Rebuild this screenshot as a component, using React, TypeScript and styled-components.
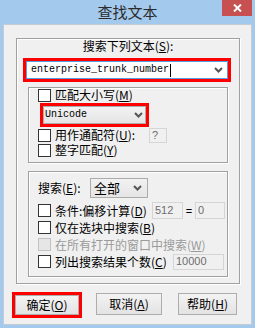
import { createGlobalStyle, styled } from 'styled-components'

const GlobalStyle = createGlobalStyle`
  html, body {
    margin: 0;
    padding: 0;
    background: #a3c9ec;
  }
  body {
    font-family: "Noto Sans CJK SC", "Liberation Sans", sans-serif;
    font-size: 12px;
    color: #000;
  }
`

const Window = styled.div`
  width: 255px;
  height: 328px;
  background: #a3c9ec;
  display: flex;
  flex-direction: column;
`

const TitleBar = styled.div`
  flex: none;
  height: 24px;
  display: grid;
  grid-template-columns: 1fr auto 1fr;
  align-items: start;
`

const Title = styled.div`
  grid-column: 2;
  font-size: 15px;
  line-height: 24px;
  color: #2b2b2b;
`

const CloseButton = styled.div`
  grid-column: 3;
  justify-self: end;
  margin-right: 3px;
  width: 30px;
  height: 16px;
  background: #c75050;
  display: flex;
  align-items: center;
  justify-content: center;
`

const Body = styled.div`
  flex: 1;
  margin: 0 3px 3px;
  background: #f0f0f0;
  border: 1px solid #c3ccd5;
  padding: 13px 0 0 10px;
  display: flex;
  flex-direction: column;
  align-items: flex-start;
`

const GroupBox = styled.div<{ $w: number; $h: number; $mt?: number; $ml?: number }>`
  box-sizing: border-box;
  width: ${(p) => p.$w}px;
  height: ${(p) => p.$h}px;
  margin: ${(p) => p.$mt ?? 0}px 0 0 ${(p) => p.$ml ?? 0}px;
  border: 1px solid #a0a0a0;
  box-shadow: inset 1px 1px 0 #fff, 1px 1px 0 #fff;
  display: flex;
  flex-direction: column;
  align-items: flex-start;
`

const SearchLabel = styled.div`
  align-self: stretch;
  text-align: center;
  line-height: 14px;
`

const Key = styled.span`
  text-decoration: underline;
`

const RedFrame = styled.div<{ $w: number; $mt?: number; $ml?: number }>`
  box-sizing: border-box;
  width: ${(p) => p.$w}px;
  margin: ${(p) => p.$mt ?? 0}px 0 0 ${(p) => p.$ml ?? 0}px;
  border: 3px solid #ff0000;
  display: flex;
`

const EditCombo = styled.div`
  flex: 1;
  box-sizing: border-box;
  height: 18px;
  border: 1px solid #569de5;
  background: #fff;
  display: flex;
  align-items: center;
  padding: 0 4px 0 4px;
`

const MonoText = styled.span`
  font-family: "Liberation Mono", "DejaVu Sans Mono", monospace;
  font-size: 10px;
  line-height: 12px;
  color: #000;
`

const Caret = styled.span`
  width: 1px;
  height: 13px;
  background: #000;
  margin-left: 1px;
`

const Spacer = styled.span`
  flex: 1;
`

const DropCombo = styled.div<{ $w: number; $h: number; $pl: number; $pr: number }>`
  box-sizing: border-box;
  width: ${(p) => p.$w}px;
  height: ${(p) => p.$h}px;
  border: 1px solid #acacac;
  background: linear-gradient(#f2f2f2, #e5e5e5);
  display: flex;
  align-items: center;
  padding: 0 ${(p) => p.$pr}px 0 ${(p) => p.$pl}px;
`

const ComboText = styled.span`
  font-size: 13px;
  line-height: 16px;
`

const Row = styled.div<{ $h: number; $mt?: number; $pl?: number }>`
  height: ${(p) => p.$h}px;
  margin-top: ${(p) => p.$mt ?? 0}px;
  padding-left: ${(p) => p.$pl ?? 9}px;
  display: flex;
  align-items: center;
  white-space: nowrap;
`

const CheckBox = styled.span<{ $disabled?: boolean }>`
  box-sizing: border-box;
  flex: none;
  width: 13px;
  height: 13px;
  border: 1px solid ${(p) => (p.$disabled ? '#c2c2c2' : '#333')};
  background: ${(p) => (p.$disabled ? '#e6e6e6' : '#fff')};
  margin-right: 4px;
`

const CheckLabel = styled.span<{ $w?: number; $disabled?: boolean }>`
  ${(p) => (p.$w ? `width: ${p.$w}px;` : '')}
  line-height: 14px;
  color: ${(p) => (p.$disabled ? '#9a9a9a' : '#000')};
`

const PlainLabel = styled.span<{ $w: number }>`
  width: ${(p) => p.$w}px;
  line-height: 14px;
`

const Field = styled.span<{ $w: number; $h: number }>`
  box-sizing: border-box;
  width: ${(p) => p.$w}px;
  height: ${(p) => p.$h}px;
  border: 1px solid #d5d5d5;
  background: #f0f0f0;
  color: #6d6d6d;
  font-family: "Liberation Sans", sans-serif;
  font-size: 11px;
  line-height: 13px;
  padding-left: 2px;
  display: flex;
  align-items: center;
`

const Equals = styled.span`
  width: 12px;
  text-align: center;
  font-family: "Liberation Sans", sans-serif;
  font-size: 11px;
`

const ButtonRow = styled.div`
  margin-top: 8px;
  margin-left: -2px;
  display: flex;
  align-items: flex-start;
`

const Button = styled.div<{ $w: number; $h: number; $mt?: number; $ml?: number }>`
  box-sizing: border-box;
  width: ${(p) => p.$w}px;
  height: ${(p) => p.$h}px;
  margin: ${(p) => p.$mt ?? 0}px 0 0 ${(p) => p.$ml ?? 0}px;
  border: 1px solid #adadad;
  background: linear-gradient(#f3f3f3, #e3e3e3);
  display: flex;
  align-items: center;
  justify-content: center;
  line-height: 14px;
`

function Chevron() {
  return (
    <svg width="9" height="6" viewBox="0 0 9 6">
      <polyline points="1,1 4.5,4.5 8,1" fill="none" stroke="#555" strokeWidth="2" />
    </svg>
  )
}

export default function App() {
  return (
    <Window>
      <GlobalStyle />
      <TitleBar>
        <Title>查找文本</Title>
        <CloseButton>
          <svg width="9" height="8" viewBox="0 0 9 8">
            <path d="M1 0.5 L8 7.5 M8 0.5 L1 7.5" stroke="#fff" strokeWidth="2" />
          </svg>
        </CloseButton>
      </TitleBar>

      <Body>
        <GroupBox $w={224} $h={246} $ml={2}>
          <SearchLabel>
            搜索下列文本(<Key>S</Key>):
          </SearchLabel>
          <RedFrame $w={208} $mt={5} $ml={6}>
            <EditCombo>
              <MonoText>enterprise_trunk_number</MonoText>
              <Caret />
              <Spacer />
              <Chevron />
            </EditCombo>
          </RedFrame>

          <GroupBox $w={200} $h={76} $mt={5} $ml={11}>
            <Row $h={14}>
              <CheckBox />
              <CheckLabel>
                匹配大小写(<Key>M</Key>)
              </CheckLabel>
            </Row>
            <RedFrame $w={109} $mt={1} $ml={11}>
              <DropCombo $w={103} $h={18} $pl={1} $pr={2}>
                <MonoText>Unicode</MonoText>
                <Spacer />
                <Chevron />
              </DropCombo>
            </RedFrame>
            <Row $h={16}>
              <CheckBox />
              <CheckLabel $w={94}>
                用作通配符(<Key>U</Key>):
              </CheckLabel>
              <Field $w={18} $h={15}>?</Field>
            </Row>
            <Row $h={14}>
              <CheckBox />
              <CheckLabel>
                整字匹配(<Key>Y</Key>)
              </CheckLabel>
            </Row>
          </GroupBox>

          <GroupBox $w={200} $h={106} $mt={8} $ml={11}>
            <Row $h={20} $mt={6}>
              <PlainLabel $w={52}>
                搜索(<Key>E</Key>):
              </PlainLabel>
              <DropCombo $w={58} $h={20} $pl={3} $pr={5}>
                <ComboText>全部</ComboText>
                <Spacer />
                <Chevron />
              </DropCombo>
            </Row>
            <Row $h={17} $mt={4}>
              <CheckBox />
              <CheckLabel $w={97}>
                条件:偏移计算(<Key>D</Key>)
              </CheckLabel>
              <Field $w={31} $h={17}>512</Field>
              <Equals>=</Equals>
              <Field $w={30} $h={17}>0</Field>
            </Row>
            <Row $h={17}>
              <CheckBox />
              <CheckLabel>
                仅在选块中搜索(<Key>B</Key>)
              </CheckLabel>
            </Row>
            <Row $h={17}>
              <CheckBox $disabled />
              <CheckLabel $disabled>
                在所有打开的窗口中搜索(<Key>W</Key>)
              </CheckLabel>
            </Row>
            <Row $h={17}>
              <CheckBox />
              <CheckLabel $w={118}>
                列出搜索结果个数(<Key>C</Key>)
              </CheckLabel>
              <Field $w={51} $h={16}>10000</Field>
            </Row>
          </GroupBox>
        </GroupBox>

        <ButtonRow>
          <RedFrame $w={70}>
            <Button $w={64} $h={20}>
              确定(<Key>O</Key>)
            </Button>
          </RedFrame>
          <Button $w={66} $h={22} $mt={1} $ml={14}>
            取消(<Key>A</Key>)
          </Button>
          <Button $w={59} $h={22} $mt={1} $ml={16}>
            帮助(<Key>H</Key>)
          </Button>
        </ButtonRow>
      </Body>
    </Window>
  )
}
